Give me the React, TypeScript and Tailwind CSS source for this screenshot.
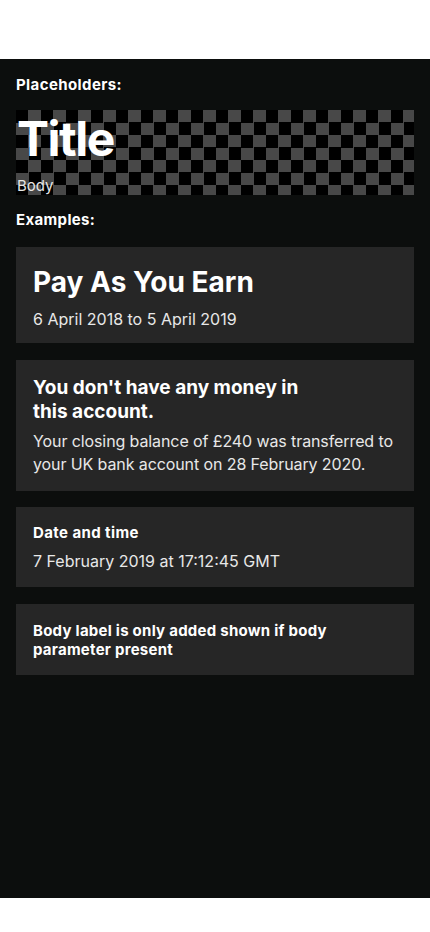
import React from "react";

function Card({ children, className }: { children: React.ReactNode; className?: string }) {
    return <div className={"bg-[#262626] px-[17px] " + (className || "")}>{children}</div>
}

function App() {
    return (
        <div className="min-h-[932px] w-full bg-white font-['Inter','Liberation_Sans',sans-serif] text-white">
            <div className="h-[59px]" />
            <div className="h-[839px] bg-[#0c0e0d] px-4 pt-[16px]">
                <div className="text-[15px] font-bold leading-[20px] tracking-[0.4px]">Placeholders:</div>

                <div className="mt-[15px] h-[85px] overflow-hidden bg-[conic-gradient(#484848_0_25%,#000_0_50%,#484848_0_75%,#000_0)] bg-[length:25px_25px] pl-px">
                    <div className="text-[48px] font-bold leading-[58px] tracking-[-1.5px]">Title</div>
                    <div className="mt-[8px] text-[15px] leading-[20px] text-[#e6e6e6]">Body</div>
                </div>

                <div className="mt-[15px] text-[15px] font-bold leading-[20px] tracking-[0.35px]">Examples:</div>

                <div className="mt-[17px] flex flex-col gap-[16.5px]">
                    <Card className="pt-[18px] pb-[13px]">
                        <div className="text-[28px] font-bold leading-[34px]">Pay As You Earn</div>
                        <div className="mt-[9px] text-[16px] leading-[22px] text-[#e8e8e8]">6 April 2018 to 5 April 2019</div>
                    </Card>

                    <Card className="pt-[16px] pb-[15px]">
                        <div className="w-[290px] text-[19px] font-bold leading-[24px]">You don't have any money in this account.</div>
                        <div className="mt-[6px] text-[16px] leading-[23px] tracking-[-0.1px] text-[#e8e8e8]">
                            Your closing balance of £240 was transferred to your UK bank account on 28 February 2020.
                        </div>
                    </Card>

                    <Card className="pt-[16px] pb-[15px]">
                        <div className="text-[15px] font-bold leading-[20px] tracking-[0.4px]">Date and time</div>
                        <div className="mt-[7px] text-[16px] leading-[22px] text-[#e8e8e8]">7 February 2019 at 17:12:45 GMT</div>
                    </Card>

                    <Card className="pt-[17px] pb-[16px]">
                        <div className="text-[15px] font-bold leading-[19px] tracking-[0.25px]">Body label is only added shown if body parameter present</div>
                    </Card>
                </div>
            </div>
        </div>
    );
}

export default App;
